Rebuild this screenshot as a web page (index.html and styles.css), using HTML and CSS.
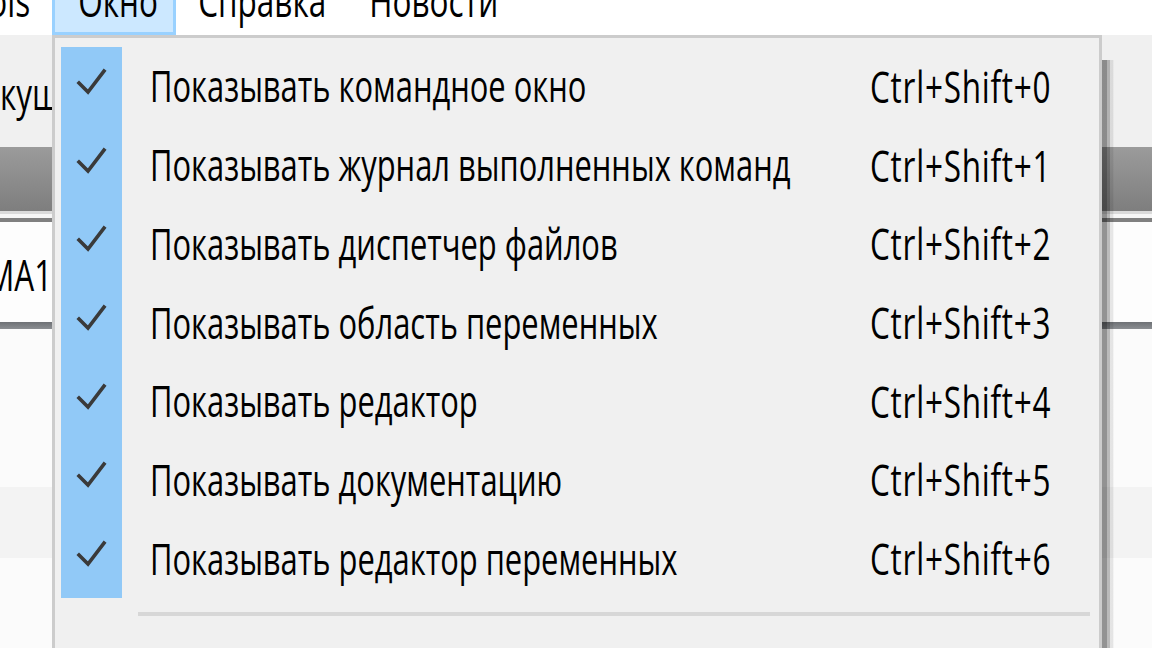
FILE: index.html
```html
<!DOCTYPE html>
<html lang="ru">
<head>
<meta charset="utf-8">
<title>Окно</title>
<link rel="stylesheet" href="styles.css">
</head>
<body>
<div class="app">
  <div class="menubar">
    <div class="mb-item mb-first"><span class="t">Tools</span></div>
    <div class="mb-item mb-active"><span class="t">Окно</span></div>
    <div class="mb-item"><span class="t">Справка</span></div>
    <div class="mb-item"><span class="t">Новости</span></div>
  </div>
  <div class="toolbar"><span class="t tb-label">Текущая папка:</span></div>
  <div class="titlebar"></div>
  <div class="title-gap"></div>
  <div class="title-rule"></div>
  <div class="filelist"><span class="t path">МА1 scripts</span></div>
  <div class="dark-rule"></div>
  <div class="pane"></div>
  <div class="band"></div>
  <div class="pane pane-last"></div>
</div>

<div class="menu">
  <div class="item">
    <div class="check"><svg viewBox="0 0 61 79" width="61" height="79"><path d="M18 36 L27 45 L43 24"/></svg></div>
    <div class="label"><span class="t">Показывать командное окно</span></div>
    <div class="key"><span class="t">Ctrl+Shift+0</span></div>
  </div>
  <div class="item">
    <div class="check"><svg viewBox="0 0 61 79" width="61" height="79"><path d="M18 36 L27 45 L43 24"/></svg></div>
    <div class="label"><span class="t">Показывать журнал выполненных команд</span></div>
    <div class="key"><span class="t">Ctrl+Shift+1</span></div>
  </div>
  <div class="item">
    <div class="check"><svg viewBox="0 0 61 79" width="61" height="79"><path d="M18 36 L27 45 L43 24"/></svg></div>
    <div class="label"><span class="t">Показывать диспетчер файлов</span></div>
    <div class="key"><span class="t">Ctrl+Shift+2</span></div>
  </div>
  <div class="item">
    <div class="check"><svg viewBox="0 0 61 79" width="61" height="79"><path d="M18 36 L27 45 L43 24"/></svg></div>
    <div class="label"><span class="t">Показывать область переменных</span></div>
    <div class="key"><span class="t">Ctrl+Shift+3</span></div>
  </div>
  <div class="item">
    <div class="check"><svg viewBox="0 0 61 79" width="61" height="79"><path d="M18 36 L27 45 L43 24"/></svg></div>
    <div class="label"><span class="t">Показывать редактор</span></div>
    <div class="key"><span class="t">Ctrl+Shift+4</span></div>
  </div>
  <div class="item">
    <div class="check"><svg viewBox="0 0 61 79" width="61" height="79"><path d="M18 36 L27 45 L43 24"/></svg></div>
    <div class="label"><span class="t">Показывать документацию</span></div>
    <div class="key"><span class="t">Ctrl+Shift+5</span></div>
  </div>
  <div class="item">
    <div class="check"><svg viewBox="0 0 61 79" width="61" height="79"><path d="M18 36 L27 45 L43 24"/></svg></div>
    <div class="label"><span class="t">Показывать редактор переменных</span></div>
    <div class="key"><span class="t">Ctrl+Shift+6</span></div>
  </div>
  <div class="sep"></div>
</div>
</body>
</html>
```

FILE: styles.css
```css
* { box-sizing: border-box; }
html, body { margin: 0; padding: 0; }
body {
  width: 1152px;
  height: 648px;
  overflow: hidden;
  position: relative;
  background: #fbfbfb;
  font-family: "Open Sans", "Noto Sans", sans-serif;
  color: #000;
}
.t {
  display: inline-block;
  font-size: 31.5px;
  line-height: 1;
  white-space: nowrap;
  transform: scaleY(1.38);
  transform-origin: 50% 50%;
}
.app {
  width: 1152px;
  height: 648px;
  display: flex;
  flex-direction: column;
}
.menubar {
  height: 35px;
  flex: none;
  background: #fff;
  display: flex;
  overflow: hidden;
}
.mb-item {
  height: 35px;
  padding: 0 21px 0 22px;
  display: flex;
  align-items: flex-start;
}
.mb-item .t { margin-top: -15.6px; }
.mb-first { margin-left: -48px; padding: 0 22px 0 0; }
.mb-active {
  width: 124px;
  padding-left: 23px;
  background: #cce8ff;
  border: 3px solid #99d1ff;
  border-top: none;
}
.toolbar {
  height: 112px;
  flex: none;
  background: #f0f0f0;
  padding-top: 42px;
}
.tb-label { margin-left: -35px; }
.titlebar {
  height: 64px;
  flex: none;
  background: linear-gradient(#9b9b9b, #7e7e7e);
}
.title-gap {
  height: 7px;
  flex: none;
  background: linear-gradient(#dadada 0 3px, #f6f6f6 3px);
}
.title-rule {
  height: 4px;
  flex: none;
  background: #808080;
}
.filelist {
  height: 100px;
  flex: none;
  background: #fdfdfd;
  padding-top: 36px;
}
.path { margin-left: -14px; }
.dark-rule {
  height: 7px;
  flex: none;
  background: linear-gradient(#6e7175, #8b8e92);
}
.pane {
  height: 158px;
  flex: none;
  background: #fbfbfb;
}
.band {
  height: 71px;
  flex: none;
  background: #f3f3f3;
}
.pane-last { flex: 1; height: auto; }

.menu {
  position: absolute;
  left: 52px;
  top: 35px;
  width: 1050px;
  height: 640px;
  background: #f0f0f0;
  border: 3px solid #cccccc;
  padding: 9px 9px 0 6px;
}
.menu::after {
  content: "";
  position: absolute;
  left: 100%;
  margin-left: 3px;
  top: 22px;
  bottom: -3px;
  width: 12px;
  background: linear-gradient(to right, rgba(0,0,0,0.42) 0 5px, rgba(0,0,0,0.26) 5px 8px, rgba(0,0,0,0.09) 8px 11px, rgba(0,0,0,0.03) 11px);
}
.item {
  display: flex;
  align-items: center;
  height: 78.72px;
}
.check {
  width: 61px;
  height: 100%;
  flex: none;
  background: #91c9f7;
  display: flex;
  align-items: center;
}
.check svg { display: block; }
.check path {
  fill: none;
  stroke: #3a3a3a;
  stroke-width: 3.6;
  stroke-linecap: square;
  stroke-linejoin: miter;
}
.label {
  width: 720px;
  margin-left: 28px;
  flex: none;
}
.label .t {
  font-size: 30.9px;
  transform: scaleY(1.405);
}
.key { flex: none; }
.key .t { letter-spacing: 0.75px; }
.sep {
  height: 4px;
  background: #d7d7d7;
  margin: 14px 0 0 77px;
}
```
